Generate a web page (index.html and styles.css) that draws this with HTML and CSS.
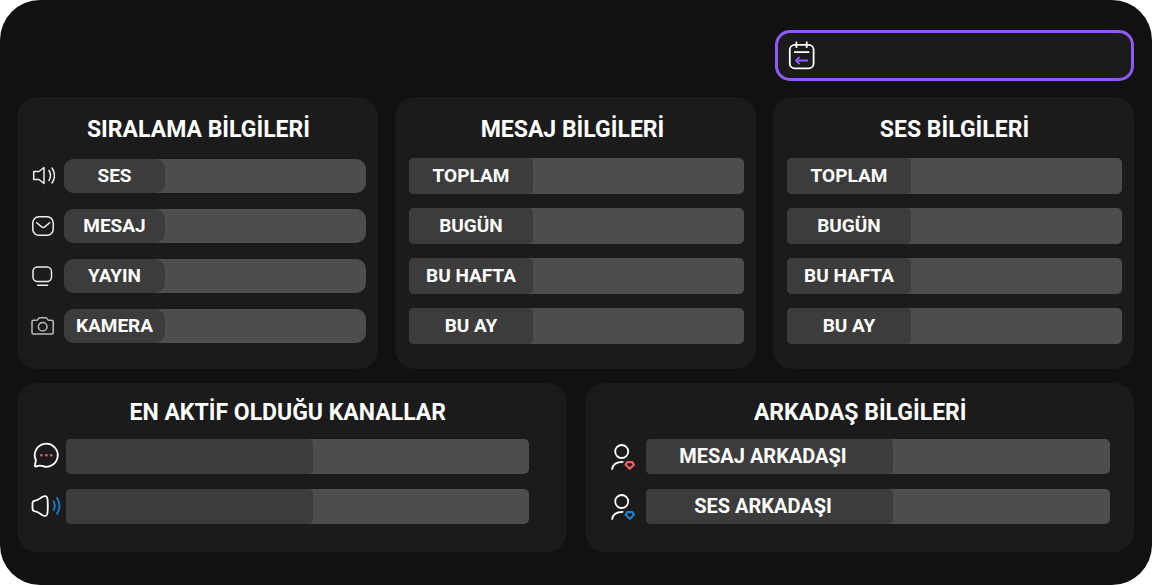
FILE: index.html
```html
<!DOCTYPE html>
<html lang="tr">
<head>
<meta charset="utf-8">
<meta name="viewport" content="width=device-width, initial-scale=1">
<title>İstatistikler</title>
<link rel="stylesheet" href="styles.css">
</head>
<body>
<main class="panel">
  <header class="top">
    <label class="date">
      <svg class="icon icon-lg" viewBox="0 0 30 30" aria-hidden="true"><rect x="2.8" y="3.8" width="23.8" height="23.6" rx="5"/><path d="M9.4 1.2v5M19.7 1.2v5M7.8 11.2h13.8"/><path class="violet" d="M20.3 19.5H9M12 16.5l-3 3 3 3"/></svg>
      <input class="date-input" type="text" aria-label="Tarih">
    </label>
  </header>

  <div class="grid grid-three">
    <section class="card">
      <h2 class="title">SIRALAMA BİLGİLERİ</h2>
      <ul class="rows">
        <li class="row row-rank"><svg class="icon" viewBox="0 0 24 24" aria-hidden="true"><path d="M2.7 7.5H8L13 3.5v16L8 15.5H2.7zM18 6.5q3 5 0 10M21 4q5 7.5 0 15"/></svg><div class="bar"><span class="label">SES</span></div></li>
        <li class="row row-rank"><svg class="icon" viewBox="0 0 24 24" aria-hidden="true"><rect x="1.8" y="2.8" width="20.4" height="18.4" rx="6"/><path d="M5.700 8.700l5 4.200q1.500 1 3 0l5-4.200"/></svg><div class="bar"><span class="label">MESAJ</span></div></li>
        <li class="row row-rank"><svg class="icon" viewBox="0 0 24 24" aria-hidden="true"><rect x="2" y="3" width="18.5" height="14.5" rx="4.500"/><path d="M6.500 21.300h10"/></svg><div class="bar"><span class="label">YAYIN</span></div></li>
        <li class="row row-rank"><svg class="icon dim" viewBox="0 0 24 24" aria-hidden="true"><path d="M2.300 6.300h3.500q.8 0 1.200-1 .5-1.500 2-1.500h5.500q1.500 0 2 1.500.4 1 1.200 1h3q1.500 0 1.500 1.500v10.700q0 1.500-1.500 1.500H2.500Q1 20 1 18.500V7.800q0-1.500 1.300-1.500z"/><circle cx="11.700" cy="12.700" r="4.300"/></svg><div class="bar"><span class="label">KAMERA</span></div></li>
      </ul>
    </section>

    <section class="card">
      <h2 class="title title-lead">MESAJ BİLGİLERİ</h2>
      <ul class="rows">
        <li class="row row-total"><div class="bar"><span class="label">TOPLAM</span></div></li>
        <li class="row row-total"><div class="bar"><span class="label">BUGÜN</span></div></li>
        <li class="row row-total"><div class="bar"><span class="label">BU HAFTA</span></div></li>
        <li class="row row-total"><div class="bar"><span class="label">BU AY</span></div></li>
      </ul>
    </section>

    <section class="card">
      <h2 class="title">SES BİLGİLERİ</h2>
      <ul class="rows">
        <li class="row row-total"><div class="bar"><span class="label">TOPLAM</span></div></li>
        <li class="row row-total"><div class="bar"><span class="label">BUGÜN</span></div></li>
        <li class="row row-total"><div class="bar"><span class="label">BU HAFTA</span></div></li>
        <li class="row row-total"><div class="bar"><span class="label">BU AY</span></div></li>
      </ul>
    </section>
  </div>

  <div class="grid grid-two">
    <section class="card card-channels">
      <h2 class="title title-lead">EN AKTİF OLDUĞU KANALLAR</h2>
      <ul class="rows">
        <li class="row row-wide"><svg class="icon icon-lg" viewBox="0 0 30 30" aria-hidden="true"><path d="M4.900 19.200A11.500 11.500 0 1 1 11 24.900q-3-.9-5.500.5Q3.500 26 4 24z"/><path class="red dots" d="M10.300 14.200h.1M15.300 14.200h.1M20.300 14.200h.1"/></svg><div class="bar"><span class="label"></span></div></li>
        <li class="row row-wide"><svg class="icon icon-lg" viewBox="0 0 30 30" aria-hidden="true"><path d="M1.500 12.500q0-2.500 2.500-2.800 2.500-.2 4.500-2l3-2q4.500-2 5 2.300.6 7 0 14-.5 4.300-5 2.300l-3-2q-2-1.800-4.500-2-2.500-.3-2.500-2.800z"/><path class="blue" d="M22.500 10.300q2.600 4.500 0 9M26 6.700q5 8 0 16"/></svg><div class="bar"><span class="label"></span></div></li>
      </ul>
    </section>

    <section class="card card-friends">
      <h2 class="title">ARKADAŞ BİLGİLERİ</h2>
      <ul class="rows">
        <li class="row row-wide"><svg class="icon icon-lg" viewBox="0 0 30 30" aria-hidden="true"><circle cx="10.700" cy="10.500" r="6.500"/><path d="M1.200 28q.8-7 10.500-7.200"/><path class="red gem" d="M16.300 21.200h5l1.700 2.600-4.200 4-4.200-4z"/></svg><div class="bar"><span class="label">MESAJ ARKADAŞI</span></div></li>
        <li class="row row-wide"><svg class="icon icon-lg" viewBox="0 0 30 30" aria-hidden="true"><circle cx="10.700" cy="10.500" r="6.500"/><path d="M1.200 28q.8-7 10.500-7.200"/><path class="blue gem" d="M16.300 21.200h5l1.700 2.600-4.200 4-4.200-4z"/></svg><div class="bar"><span class="label">SES ARKADAŞI</span></div></li>
      </ul>
    </section>
  </div>
</main>
</body>
</html>
```

FILE: styles.css
```css
* {
  box-sizing: border-box;
}

body {
  margin: 0;
  background: #fff;
  color: #fff;
  font-family: Roboto, "Liberation Sans", sans-serif;
}

.panel {
  min-height: 100vh;
  padding: 30px 18px 30px 17px;
  border-radius: 40px;
  background: #111;
}

.top {
  display: flex;
  justify-content: flex-end;
  margin-bottom: 16px;
}

.date {
  display: flex;
  align-items: center;
  gap: 8px;
  width: 359px;
  height: 51px;
  padding: 0 9px;
  border: 3px solid #8f5bff;
  border-radius: 15px;
  background: #1b1b1b;
}

.date-input {
  flex: 1;
  min-width: 0;
  border: 0;
  outline: 0;
  background: transparent;
  color: #fff;
  font: inherit;
  font-size: 20px;
}

.grid {
  display: grid;
}

.grid-three {
  grid-template-columns: repeat(3, 1fr);
  gap: 17px;
  margin-bottom: 14px;
}

.grid-two {
  grid-template-columns: repeat(2, 1fr);
  gap: 18px;
}

.card {
  padding: 17px 12px 25px 14px;
  border-radius: 20px;
  background: #1b1b1b;
}

.card-channels {
  padding: 14px 14px 28px 14px;
}

.card-channels .rows {
  padding-right: 24px;
}

.card-friends {
  padding: 14px 24px 28px 26px;
}

.title {
  margin: 0 0 12px;
  font-size: 23px;
  font-weight: 700;
  line-height: 32px;
  text-align: center;
}

.grid-two .title {
  margin-bottom: 9px;
}

.title-lead {
  padding-right: 8px;
}

.rows {
  display: grid;
  gap: 14px;
  margin: 0;
  padding: 0;
  list-style: none;
}

.row {
  display: flex;
  align-items: center;
  height: 36px;
}

.row-wide {
  gap: 5px;
}

.row-rank {
  gap: 9px;
}

.bar {
  display: flex;
  flex: 1;
  height: 36px;
  border-radius: 5px;
  background: #4d4d4d;
}

.row-rank .bar {
  height: 34px;
  border-radius: 10px;
}

.row-wide .bar {
  height: 35px;
}

.label {
  width: 37%;
  border-radius: inherit;
  background: #3c3c3c;
  font-size: 19px;
  font-weight: 700;
  line-height: 36px;
  text-align: center;
}

.row-rank .label {
  width: 101px;
  line-height: 34px;
}

.row-wide .label {
  width: 247px;
  padding-right: 12px;
  font-size: 20px;
  line-height: 34px;
}

.icon {
  flex: none;
  width: 24px;
  height: 24px;
  fill: none;
  stroke: #eee;
  stroke-width: 1.5;
  stroke-linecap: round;
  stroke-linejoin: round;
}

.icon-lg {
  width: 30px;
  height: 30px;
  stroke: #fff;
  stroke-width: 1.8;
}

.dim {
  stroke: #bbb;
}

.violet {
  stroke: #8f5bff;
}

.red {
  stroke: #f06060;
}

.blue {
  stroke: #1c80d0;
}

.gem {
  stroke-width: 2.2;
}

.dots {
  stroke-width: 2.5;
}
```
